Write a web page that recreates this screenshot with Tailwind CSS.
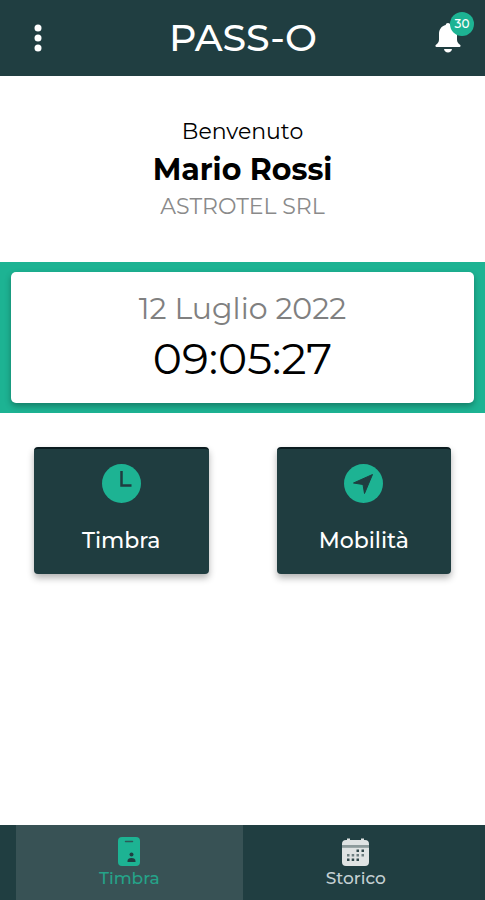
<!DOCTYPE html>
<html lang="it">
<head>
  <meta charset="UTF-8" />
  <meta name="viewport" content="width=device-width, initial-scale=1.0" />
  <title>PASS-O</title>
  <script src="https://cdn.jsdelivr.net/npm/@tailwindcss/browser@4"></script>
</head>
<body class="min-h-screen flex flex-col bg-white text-black font-['Montserrat','Inter',sans-serif]">
  <!-- Barra superiore -->
  <header class="h-[76px] flex items-center justify-between pl-6 pr-[23px] bg-[#203e41] text-white">
    <button type="button" aria-label="Menu" class="w-7 h-10 flex items-center justify-center">
      <svg class="w-2 h-7" viewBox="0 0 8 28" fill="currentColor">
        <circle cx="4" cy="4" r="3.500" />
        <circle cx="4" cy="14" r="3.500" />
        <circle cx="4" cy="24" r="3.500" />
      </svg>
    </button>
    <h1 class="text-[38px] leading-10 font-medium">PASS-O</h1>
    <button type="button" aria-label="Notifiche" class="relative w-7 h-10 flex items-center justify-center">
      <svg class="w-7 h-8" viewBox="0 0 28 32" fill="currentColor">
        <path d="M14 1c-1.400 0-2.100.8-2.300 2C7.400 4 5 7.500 5 12v5.500c0 2.500-1.200 4-3 5.200-.9.600-.7 2.300.5 2.300h23c1.200 0 1.400-1.700.5-2.300-1.800-1.200-3-2.700-3-5.200V12c0-4.500-2.400-8-6.700-9-.2-1.200-.9-2-2.300-2z" />
        <path d="M10 27h8c-.3 2.300-1.900 3.500-4 3.500S10.300 29.300 10 27z" />
      </svg>
      <span class="absolute -top-[6px] -right-3 size-6 rounded-full bg-[#1db393] text-xs leading-6 font-medium text-center">30</span>
    </button>
  </header>

  <main class="flex-1">
    <section class="pt-10 pb-10 text-center">
      <p class="text-[22px] leading-8">Benvenuto</p>
      <h2 class="text-[30px] leading-11 font-bold">Mario Rossi</h2>
      <p class="text-[22px] leading-[30px] text-[#8a8a8a]">ASTROTEL SRL</p>
    </section>

    <!-- Data e ora -->
    <section class="px-[11px] py-[10px] bg-[#1db393]">
      <div class="h-[131px] pt-[17px] rounded-[5px] bg-white text-center shadow-[0_3px_6px_rgba(0,0,0,0.3)]">
        <p class="text-[30px] leading-10 text-[#808080]">12 Luglio 2022</p>
        <p class="text-[44px] leading-[58px]">09:05:27</p>
      </div>
    </section>

    <section class="grid grid-cols-2 gap-[68px] px-[34px] pt-[34px]">
      <button type="button" class="h-[127px] pt-[15px] flex flex-col items-center gap-[22px] rounded-[4px] border-t-2 border-[#0b1c20] bg-[#1f3d40] text-white shadow-[0_4px_7px_rgba(0,0,0,0.3)]">
        <svg class="size-[39px]" viewBox="0 0 39 39">
          <circle cx="19.500" cy="19.500" r="19.500" fill="#1db393" />
          <path d="M19.500 7v14.500h10" fill="none" stroke="#1f3d40" stroke-width="2.500" />
        </svg>
        <span class="text-[22px] leading-8 font-medium">Timbra</span>
      </button>
      <button type="button" class="h-[127px] pt-[15px] flex flex-col items-center gap-[22px] rounded-[4px] border-t-2 border-[#0b1c20] bg-[#1f3d40] text-white shadow-[0_4px_7px_rgba(0,0,0,0.3)]">
        <svg class="size-[39px]" viewBox="0 0 39 39">
          <circle cx="19.500" cy="19.500" r="19.500" fill="#1db393" />
          <path d="M28.500 10.500L9.500 19l9.500 1.500L20.500 29.500z" fill="#1f3d40" stroke="#1f3d40" stroke-width="1" stroke-linejoin="round" />
        </svg>
        <span class="text-[22px] leading-8 font-medium">Mobilità</span>
      </button>
    </section>
  </main>

  <!-- Navigazione -->
  <nav class="h-[75px] px-4 grid grid-cols-2 bg-[#203e41] text-[17px] leading-6 font-medium">
    <a href="#" class="pt-3 flex flex-col items-center bg-[#385255] text-[#25a389]">
      <svg class="w-[22px] h-[29px]" viewBox="0 0 22 29">
        <rect width="22" height="29" rx="4" fill="#1db393" />
        <path d="M7.500 4.500h7" stroke="#2c5a57" stroke-width="1.500" stroke-linecap="round" />
        <circle cx="13.500" cy="17.500" r="2" fill="#203e41" />
        <path d="M9.500 25v-1c0-2 1.500-3 4-3s4 1 4 3v1z" fill="#203e41" />
      </svg>
      Timbra
    </a>
    <a href="#" class="pt-3 flex flex-col items-center text-[#c5d0d3]">
      <svg class="w-[27px] h-[29px]" viewBox="0 0 27 29">
        <path d="M4 3h1V1.500h3V3h11V1.500h3V3h1a4 4 0 0 1 4 4v1H0V7a4 4 0 0 1 4-4z" fill="#dfe3e3" />
        <path d="M0 8h27v2.500H0z" fill="#8c9a9b" />
        <path d="M0 10.500h27V25a4 4 0 0 1-4 4H4a4 4 0 0 1-4-4z" fill="#dfe3e3" />
        <g fill="#30484b">
          <path d="M14.500 12.500H17V15h-2.500zM19.500 12.500H22V15h-2.500z" />
          <path d="M5 17h2.500v2.500H5zM9.700 17h2.500v2.500H9.700zM14.500 17H17v2.500h-2.500zM19.500 17H22v2.500h-2.500z" opacity=".65" />
          <path d="M5 21.500h2.500V24H5zM9.700 21.500h2.500V24H9.700zM14.500 21.500H17V24h-2.500z" />
        </g>
      </svg>
      Storico
    </a>
  </nav>
</body>
</html>
